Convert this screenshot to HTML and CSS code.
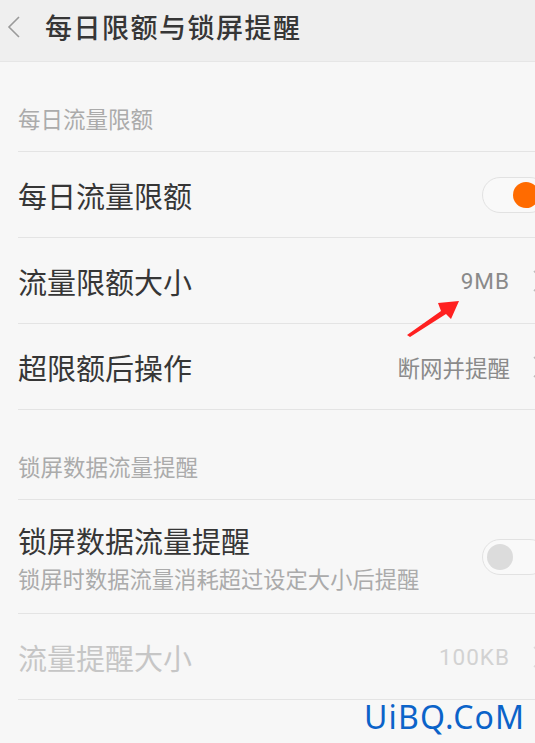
FILE: index.html
```html
<!DOCTYPE html>
<html lang="zh-CN">
<head>
    <meta charset="UTF-8">
    <meta name="viewport" content="width=device-width, initial-scale=1.0">
    <title>每日限额与锁屏提醒</title>
    <link rel="stylesheet" href="styles.css">
</head>
<body>

    <div class="topbar">
        <svg class="back" width="14" height="22" viewBox="0 0 14 22">
            <polyline points="12,1 2,11 12,21" fill="none" stroke="#9a9a9a" stroke-width="1.6"/>
        </svg>
        <h1>每日限额与锁屏提醒</h1>
    </div>

    <div class="lista">
        <div class="secao">每日流量限额</div>

        <div class="item">
            <span class="titulo">每日流量限额</span>
            <span class="chave ligada"><i></i></span>
        </div>

        <div class="item">
            <span class="titulo">流量限额大小</span>
            <span class="valor num">9MB</span>
            <svg class="seta" width="12" height="22" viewBox="0 0 12 22">
                <polyline points="1,1 11,11 1,21" fill="none" stroke="#bdbdbd" stroke-width="1.6"/>
            </svg>
        </div>

        <div class="item">
            <span class="titulo">超限额后操作</span>
            <span class="valor">断网并提醒</span>
            <svg class="seta" width="12" height="22" viewBox="0 0 12 22">
                <polyline points="1,1 11,11 1,21" fill="none" stroke="#bdbdbd" stroke-width="1.6"/>
            </svg>
        </div>

        <div class="secao">锁屏数据流量提醒</div>

        <div class="item alto">
            <div class="textos">
                <span class="titulo">锁屏数据流量提醒</span>
                <span class="sub">锁屏时数据流量消耗超过设定大小后提醒</span>
            </div>
            <span class="chave"><i></i></span>
        </div>

        <div class="item desativado">
            <span class="titulo">流量提醒大小</span>
            <span class="valor num">100KB</span>
            <svg class="seta" width="12" height="22" viewBox="0 0 12 22">
                <polyline points="1,1 11,11 1,21" fill="none" stroke="#dcdcdc" stroke-width="1.6"/>
            </svg>
        </div>
    </div>

    <!-- seta vermelha apontando para o valor -->
    <svg class="marcador" width="65" height="45" viewBox="0 0 65 45">
        <polygon points="7,39 41,15 38,7 59,5 51,23 46,18 10,41" fill="#ff2020"/>
    </svg>

    <div class="marca">UiBQ.CoM</div>

</body>
</html>
```

FILE: styles.css
```css
:root {
    --fundo: #f7f7f7;
    --fundo-topo: #efefef;
    --linha: #e4e4e4;
    --texto: #363636;
    --cinza: #8a8a8a;
    --cinza-claro: #ababab;
    --laranja: #ff6b00;
}

* {
    box-sizing: border-box;
    margin: 0;
    padding: 0;
}

body {
    font-family: Roboto, "Noto Sans CJK SC", sans-serif;
    background-color: var(--fundo);
    width: 535px;
    height: 743px;
    overflow: hidden;
    position: relative;
}

.topbar {
    height: 62px;
    background-color: var(--fundo-topo);
    border-bottom: 1px solid #e6e6e6;
    display: flex;
    align-items: center;
    padding-left: 7px;
    padding-bottom: 8px;
}

.back {
    margin-right: 24px;
}

.topbar h1 {
    font-size: 27px;
    font-weight: 500;
    color: var(--texto);
    letter-spacing: 1.5px;
}

.lista {
    padding-left: 18px;
}

.secao {
    height: 90px;
    padding-top: 43px;
    font-size: 22.5px;
    line-height: 30px;
    color: var(--cinza-claro);
    border-bottom: 1px solid var(--linha);
}

.item {
    height: 86px;
    display: flex;
    align-items: center;
    border-bottom: 1px solid var(--linha);
}

.item.alto {
    height: 114px;
}

.titulo {
    font-size: 29px;
    color: var(--texto);
    flex: 1;
}

.textos {
    flex: 1;
    display: flex;
    flex-direction: column;
    gap: 1px;
}

.sub {
    font-size: 22.3px;
    color: var(--cinza-claro);
}

.valor {
    font-size: 22.5px;
    color: var(--cinza);
}

.valor.num {
    letter-spacing: 1px;
}

.seta {
    margin-left: 23px;
    margin-right: -10px;
}

.desativado .titulo {
    color: #c6c6c6;
}

.desativado .valor {
    color: #d2d2d2;
}

/* interruptor */
.chave {
    width: 66px;
    height: 36px;
    margin-right: -13px;
    border: 1.5px solid #e2e2e2;
    border-radius: 18px;
    background-color: #f9f9f9;
    display: flex;
    align-items: center;
    padding: 0 4px;
}

.chave i {
    width: 26px;
    height: 26px;
    border-radius: 50%;
    background-color: #dcdcdc;
}

.chave.ligada {
    justify-content: flex-end;
    padding-right: 8px;
}

.chave.ligada i {
    background-color: var(--laranja);
}

.marcador {
    position: absolute;
    left: 400px;
    top: 296px;
}

.marca {
    position: absolute;
    left: 364px;
    top: 699px;
    font-family: "Noto Sans", sans-serif;
    font-size: 32px;
    line-height: 36px;
    letter-spacing: 1.2px;
    color: #0b63c9;
}
```
